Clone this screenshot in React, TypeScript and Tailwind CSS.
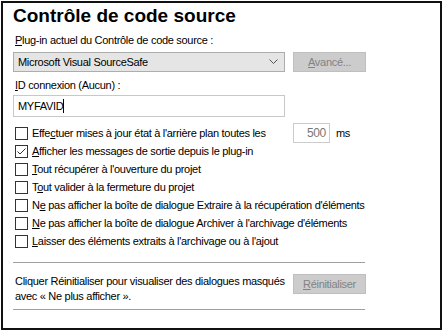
import React from 'react';

const rows: { pre: string; key: string; post: string; checked?: boolean; extra?: boolean }[] = [
  { pre: 'Effe', key: 'c', post: 'tuer mises à jour état à l\'arrière plan toutes les', extra: true },
  { pre: '', key: 'A', post: 'fficher les messages de sortie depuis le plug-in', checked: true },
  { pre: '', key: 'T', post: 'out récupérer à l\'ouverture du projet' },
  { pre: 'T', key: 'o', post: 'ut valider à la fermeture du projet' },
  { pre: 'N', key: 'e', post: ' pas afficher la boîte de dialogue Extraire à la récupération d\'éléments' },
  { pre: '', key: 'N', post: 'e pas afficher la boîte de dialogue Archiver à l\'archivage d\'éléments' },
  { pre: '', key: 'L', post: 'aisser des éléments extraits à l\'archivage ou à l\'ajout' },
];

function Check({ checked }: { checked?: boolean }) {
  return (
    <div className="w-[13px] h-[13px] border border-[#333333] bg-white flex items-center justify-center shrink-0">
      {checked && (
        <svg width="11" height="11" viewBox="0 0 11 11">
          <path d="M1.5 5.5 L4 8 L9.5 2.5" fill="none" stroke="#333333" strokeWidth="1" />
        </svg>
      )}
    </div>
  );
}

export default function App() {
  return (
    <div className="w-[444px] h-[332px] bg-white" style={{ fontFamily: '"Liberation Sans", Arial, sans-serif' }}>
      <div className="ml-[1px] mt-[1px] w-[441px] h-[329px] border-2 border-[#111111] pl-[10px] pr-[74px] pt-[2px] text-[11px] tracking-[-0.3px] text-black">
        <h1 className="text-[19px] tracking-normal font-bold leading-[22px]">Contrôle de code source</h1>

        <div className="mt-[6px] pl-[2px] leading-[14px]">
          <span className="underline">P</span>lug-in actuel du Contrôle de code source :
        </div>
        <div className="mt-[5px] flex gap-[8px]">
          <div className="w-[272px] h-[20px] bg-[#e5e5e5] border border-[#adadad] flex items-center justify-between pl-[4px] pr-[6px]">
            <span>Microsoft Visual SourceSafe</span>
            <svg width="9" height="6" viewBox="0 0 9 6">
              <path d="M0.5 0.5 L4.5 4.5 L8.5 0.5" fill="none" stroke="#555555" strokeWidth="1" />
            </svg>
          </div>
          <div className="w-[73px] h-[20px] bg-[#cccccc] border border-[#bfbfbf] text-[#838383] flex items-center justify-center">
            <span><span className="underline">A</span>vancé...</span>
          </div>
        </div>

        <div className="mt-[6px] pl-[2px] leading-[14px]">
          <span className="underline">I</span>D connexion (Aucun) :
        </div>
        <div className="mt-[3px] w-[272px] h-[22px] border border-[#c8c8c8] flex items-center pl-[4px]">
          MYFAVID<span className="inline-block w-px h-[14px] bg-black" />
        </div>

        <div className="mt-[7px] flex flex-col">
          {rows.map((r, i) => (
            <div key={i} className="h-[18px] flex items-center pl-[2px] gap-[4px]">
              <Check checked={r.checked} />
              <span className={r.extra ? 'whitespace-nowrap w-[257px]' : 'whitespace-nowrap'}>
                {r.pre}
                <span className="underline">{r.key}</span>
                {r.post}
              </span>
              {r.extra && (
                <div className="flex items-center gap-[6px]">
                  <div className="w-[37px] h-[20px] border border-[#cccccc] text-[#777777] text-[12px] flex items-center justify-end pr-[3px]">500</div>
                  <span>ms</span>
                </div>
              )}
            </div>
          ))}
        </div>

        <div className="mt-[12px] h-px bg-[#a0a0a0] w-[352px]" />
        <div className="mt-[11px] flex items-start gap-[8px]">
          <div className="w-[272px] leading-[15px] pl-[2px]">
            Cliquer Réinitialiser pour visualiser des dialogues masqués
            <br />
            avec « Ne plus afficher ».
          </div>
          <div className="w-[73px] h-[20px] bg-[#cccccc] border border-[#bfbfbf] text-[#838383] flex items-center justify-center">
            <span><span className="underline">R</span>éinitialiser</span>
          </div>
        </div>
        <div className="mt-[5px] h-px bg-[#a0a0a0] w-[352px]" />
      </div>
    </div>
  );
}
